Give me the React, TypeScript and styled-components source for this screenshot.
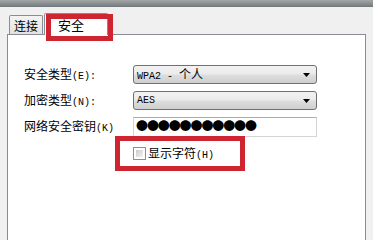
import styled, {createGlobalStyle} from 'styled-components'

const GlobalStyle = createGlobalStyle`
  html, body {
    margin: 0;
    padding: 0;
    background: #f0f0f0;
  }
  body {
    font-family: "Noto Sans CJK SC", "Noto Sans", sans-serif;
    font-size: 12px;
    color: #000;
  }
`

const Screen = styled.div`
  width: 373px;
  height: 240px;
  overflow: hidden;
  display: flex;
  flex-direction: column;
  background: #f0f0f0;
`

const TitleStrip = styled.div`
  height: 7px;
  flex: none;
  background: linear-gradient(#a3a7a7, #72777a);
`

const TabBar = styled.div`
  display: flex;
  align-items: flex-end;
  height: 28px;
  padding-left: 9px;
  margin-bottom: -1px;
  gap: 1px;
  position: relative;
  z-index: 1;
  flex: none;
`

const Tab = styled.div<{$active?: boolean}>`
  position: relative;
  box-sizing: border-box;
  display: flex;
  align-items: center;
  border: 1px solid #898c95;
  border-bottom: none;
  border-radius: 2px 2px 0 0;
  line-height: 1;
  ${({$active}) => $active ? `
    height: 22px;
    width: 64px;
    padding: 0 0 0 13px;
    font-size: 13px;
    background: #fff;
  ` : `
    height: 19px;
    width: 34px;
    margin-bottom: 1px;
    padding: 2px 0 0 4px;
    background: linear-gradient(#f3f3f3, #e2e2e2);
  `}
`

// red marker drawn over the screenshot
const Annotation = styled.div<{$top: number; $right: number; $bottom: number; $left: number}>`
  position: absolute;
  top: ${({$top}) => $top}px;
  right: ${({$right}) => $right}px;
  bottom: ${({$bottom}) => $bottom}px;
  left: ${({$left}) => $left}px;
  border: 5px solid #cf2530;
  pointer-events: none;
  z-index: 2;
`

const Panel = styled.div`
  flex: 1;
  margin: 0 7px 0 7px;
  background: #fff;
  border: 1px solid #898c95;
  border-bottom: none;
  padding: 30px 0 0 16px;
`

const Form = styled.div`
  display: grid;
  grid-template-columns: 109px 184px;
  grid-template-rows: 19px 19px 20px;
  row-gap: 7px;
  align-items: center;
`

const Label = styled.div`
  white-space: nowrap;
  line-height: 1;
`

const Hotkey = styled.span`
  font-family: "Liberation Mono", monospace;
  font-size: 10px;
`

const Combo = styled.div`
  box-sizing: border-box;
  height: 100%;
  display: flex;
  align-items: center;
  justify-content: space-between;
  padding: 0 6px 0 3px;
  border: 1px solid #707070;
  border-radius: 3px;
  background: linear-gradient(#f2f2f2 0%, #ebebeb 45%, #dddddd 55%, #cfcfcf 100%);
  font-family: "Liberation Mono", "Noto Sans CJK SC", monospace;
  font-size: 10px;
  white-space: pre;
`

const ComboText = styled.span`
  line-height: 1;
`

const Cjk = styled.span`
  font-family: "Noto Sans CJK SC", sans-serif;
  font-size: 12px;
`

const Arrow = () => (
  <svg width="7" height="4" viewBox="0 0 7 4">
    <path d="M0 0 L7 0 L3.5 4 Z" fill="#000" />
  </svg>
)

const Secret = styled.div`
  box-sizing: border-box;
  height: 100%;
  display: flex;
  align-items: center;
  padding: 0 0 3px 2px;
  border: 1px solid #d5d5d5;
  border-top-color: #abadb3;
  background: #fff;
  font-family: "Noto Sans CJK SC", sans-serif;
  font-size: 12px;
  letter-spacing: -1.1px;
  line-height: 1;
`

const ShowRow = styled.div`
  position: relative;
  display: flex;
  align-items: center;
  margin: 10px 0 0 109px;
  gap: 2px;
  width: 112px;
  height: 13px;
`

const CheckBox = styled.span`
  box-sizing: border-box;
  width: 13px;
  height: 13px;
  border: 1px solid #8f8f8f;
  background: #fff;
  padding: 2px;
  display: block;
  &::after {
    content: '';
    display: block;
    width: 100%;
    height: 100%;
    background: linear-gradient(135deg, #cbcbcb, #f3f3f3);
  }
`

const CheckText = styled.span`
  line-height: 1;
  white-space: nowrap;
`

export default function App() {
  return (
    <Screen>
      <GlobalStyle />
      <TitleStrip />
      <TabBar>
        <Tab>连接</Tab>
        <Tab $active>
          安全
          <Annotation $top={0} $right={-6} $bottom={-6} $left={1} />
        </Tab>
      </TabBar>
      <Panel>
        <Form>
          <Label>安全类型<Hotkey>(E):</Hotkey></Label>
          <Combo>
            <ComboText>WPA2 - <Cjk>个人</Cjk></ComboText>
            <Arrow />
          </Combo>
          <Label>加密类型<Hotkey>(N):</Hotkey></Label>
          <Combo>
            <ComboText>AES</ComboText>
            <Arrow />
          </Combo>
          <Label>网络安全密钥<Hotkey>(K)</Hotkey></Label>
          <Secret>●●●●●●●●●●●</Secret>
        </Form>
        <ShowRow>
          <CheckBox />
          <CheckText>显示字符<Hotkey>(H)</Hotkey></CheckText>
          <Annotation $top={-11} $right={0} $bottom={-11} $left={-18} />
        </ShowRow>
      </Panel>
    </Screen>
  )
}
